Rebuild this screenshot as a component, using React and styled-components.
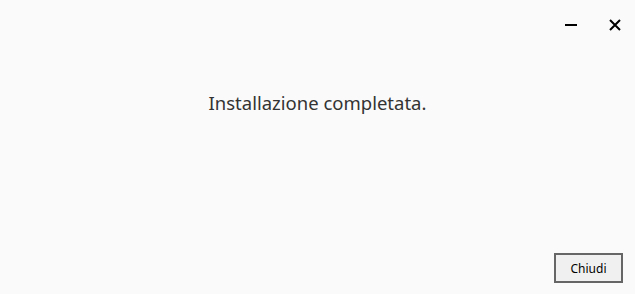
import React from "react";
import styled, { createGlobalStyle } from "styled-components";

const Global = createGlobalStyle`
  html, body { margin: 0; padding: 0; background: #fafafa; }
  body { font-family: "Noto Sans", "Open Sans", sans-serif; }
`;

const Window = styled.div`
  width: 635px;
  height: 294px;
  display: flex;
  flex-direction: column;
  background: #fafafa;
  box-sizing: border-box;
`;

const TitleBar = styled.div`
  display: flex;
  justify-content: flex-end;
  align-items: center;
  gap: 4px;
  height: 49px;
`;

const CaptionButton = styled.button`
  width: 40px;
  height: 40px;
  border: none;
  background: transparent;
  padding: 0;
  display: flex;
  align-items: center;
  justify-content: center;
  cursor: default;
`;

const Body = styled.div`
  flex: 1;
  display: flex;
  justify-content: center;
  padding-top: 41px;
`;

const Message = styled.div`
  font-size: 18.5px;
  color: #333;
  line-height: 25px;
`;

const Footer = styled.div`
  display: flex;
  justify-content: flex-end;
  padding: 0 12px 11px 0;
`;

const Button = styled.button`
  width: 69px;
  height: 30px;
  box-sizing: border-box;
  border: 2px solid #666;
  background: #f0f0f0;
  font-family: "Noto Sans", "Open Sans", sans-serif;
  font-size: 12px;
  color: #000;
  padding: 0;
`;

export default function App() {
  return (
    <>
      <Global />
      <Window>
        <TitleBar>
          <CaptionButton aria-label="Riduci a icona">
            <svg width="12" height="12" viewBox="0 0 12 12">
              <rect x="0" y="5" width="12" height="2" fill="#000" />
            </svg>
          </CaptionButton>
          <CaptionButton aria-label="Chiudi">
            <svg width="12" height="12" viewBox="0 0 12 12">
              <path d="M1 1 L11 11 M11 1 L1 11" stroke="#000" strokeWidth="2" />
            </svg>
          </CaptionButton>
        </TitleBar>
        <Body>
          <Message>Installazione completata.</Message>
        </Body>
        <Footer>
          <Button>Chiudi</Button>
        </Footer>
      </Window>
    </>
  );
}
